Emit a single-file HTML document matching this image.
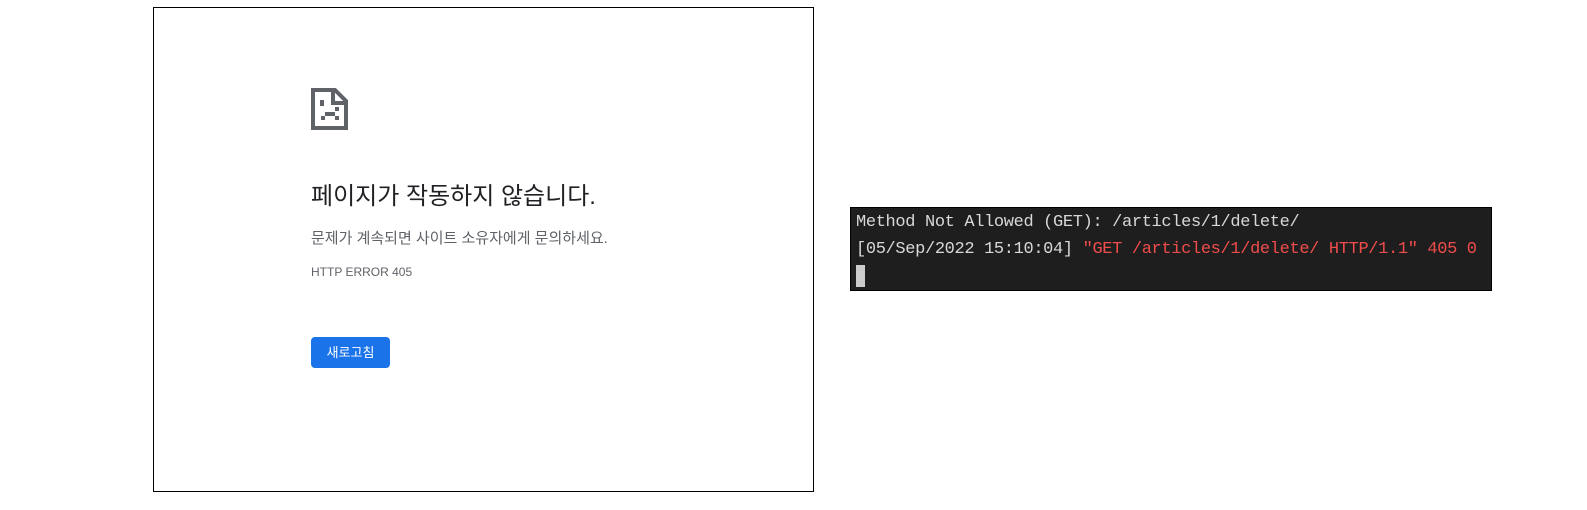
<!DOCTYPE html>
<html><head><meta charset="utf-8"><style>
body{margin:0;width:1587px;height:510px;background:#fff;position:relative;overflow:hidden;font-family:"Liberation Sans","Noto Sans CJK KR",sans-serif}
.box{position:absolute;left:153px;top:7px;width:659px;height:483px;border:1px solid #000}
.t{position:absolute;left:311px;white-space:nowrap}
.term{position:absolute;left:850px;top:207px;width:642px;height:84px;background:#1e1e1e;border:1px solid #000;font-family:"Liberation Mono",monospace;font-size:17px;letter-spacing:-0.35px;color:#d8d8d8;line-height:27px;padding:1px 0 0 5px;box-sizing:border-box}
.term div{white-space:pre}
.r{color:#f14c4c}
</style></head><body>
<div class="box"></div>
<svg class="t" style="top:88px" width="37" height="42" viewBox="0 0 37 42">
<path d="M2 2H24L35 13V40H2Z" fill="none" stroke="#5f6368" stroke-width="4"/>
<path d="M22 2V15H35" fill="none" stroke="#5f6368" stroke-width="4"/>
<rect x="9" y="12" width="4" height="6" fill="#5f6368"/>
<rect x="24" y="19" width="4" height="4" fill="#5f6368"/>
<rect x="10" y="28" width="4" height="4" fill="#5f6368"/>
<rect x="14" y="24" width="10" height="4" fill="#5f6368"/>
<rect x="24" y="28" width="4" height="4" fill="#5f6368"/>
</svg>
<div class="t" style="top:176px;font-size:24px;color:#202124">페이지가 작동하지 않습니다.</div>
<div class="t" style="top:227px;font-size:15px;color:#5f6368">문제가 계속되면 사이트 소유자에게 문의하세요.</div>
<div class="t" style="top:265px;font-size:12px;color:#5f6368">HTTP ERROR 405</div>
<div class="t" style="top:337px;width:79px;height:31px;background:#1a73e8;border-radius:4px;color:#fff;font-size:13px;text-align:center;line-height:31px">새로고침</div>
<div class="term">
<div>Method Not Allowed (GET): /articles/1/delete/</div>
<div>[05/Sep/2022 15:10:04] <span class="r">"GET /articles/1/delete/ HTTP/1.1" 405 0</span></div>
<div><span style="display:inline-block;width:9px;height:22px;background:#ccc;vertical-align:middle"></span></div>
</div>
</body></html>
